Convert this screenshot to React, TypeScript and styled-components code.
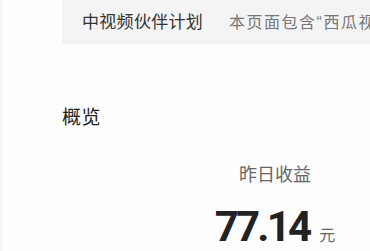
import React from 'react';
import styled, { createGlobalStyle } from 'styled-components';

const GlobalStyle = createGlobalStyle`
  html, body {
    margin: 0;
    padding: 0;
    background: #fdfdfd;
    overflow: hidden;
  }
  body {
    font-family: "Noto Sans CJK SC", "Noto Sans", sans-serif;
  }
`;

const Page = styled.div`
  width: 370px;
  height: 251px;
  border-left: 2px solid #f5f5f5;
  box-sizing: border-box;
  padding-left: 60px;
  overflow: hidden;
`;

const Banner = styled.div`
  height: 41px;
  background: #f4f4f4;
  border-bottom: 3px solid #f0f0f0;
  display: flex;
  align-items: center;
  padding-left: 20px;
  white-space: nowrap;
  color: #333;
`;

const Title = styled.span`
  font-size: 17px;
  letter-spacing: 0.3px;
  color: #333;
`;

const Divider = styled.span`
  width: 1px;
  height: 18px;
  background: #d8d8d8;
  margin: 2px 13px 0 13px;
`;

// Latin quotes come from Liberation Sans so they stay narrow
const Notice = styled.span`
  font-family: "Liberation Sans", "Noto Sans CJK SC", sans-serif;
  font-size: 16px;
  letter-spacing: 1.5px;
  color: #777;
`;

const Section = styled.div`
  padding-top: 60px;
`;

const SectionTitle = styled.div`
  font-size: 19px;
  line-height: 24px;
  color: #222;
  letter-spacing: 0.5px;
`;

const Stat = styled.div`
  width: 426px;
  margin-top: 33px;
  display: flex;
  flex-direction: column;
  align-items: center;
`;

const StatLabel = styled.div`
  font-size: 18px;
  line-height: 24px;
  color: #666;
`;

const StatValue = styled.div`
  margin-top: 21px;
  display: flex;
  align-items: baseline;
  gap: 10px;
`;

const Amount = styled.span`
  font-family: "Roboto", "Liberation Sans", sans-serif;
  font-weight: 700;
  font-size: 42px;
  line-height: 42px;
  letter-spacing: -2.8px;
  color: #222;
`;

const Unit = styled.span`
  font-size: 16px;
  color: #666;
`;

export default function App() {
  return (
    <>
      <GlobalStyle />
      <Page>
        <Banner>
          <Title>中视频伙伴计划</Title>
          <Divider />
          <Notice>本页面包含“西瓜视频”与“抖音”数据</Notice>
        </Banner>
        <Section>
          <SectionTitle>概览</SectionTitle>
          <Stat>
            <StatLabel>昨日收益</StatLabel>
            <StatValue>
              <Amount>77.14</Amount>
              <Unit>元</Unit>
            </StatValue>
          </Stat>
        </Section>
      </Page>
    </>
  );
}
